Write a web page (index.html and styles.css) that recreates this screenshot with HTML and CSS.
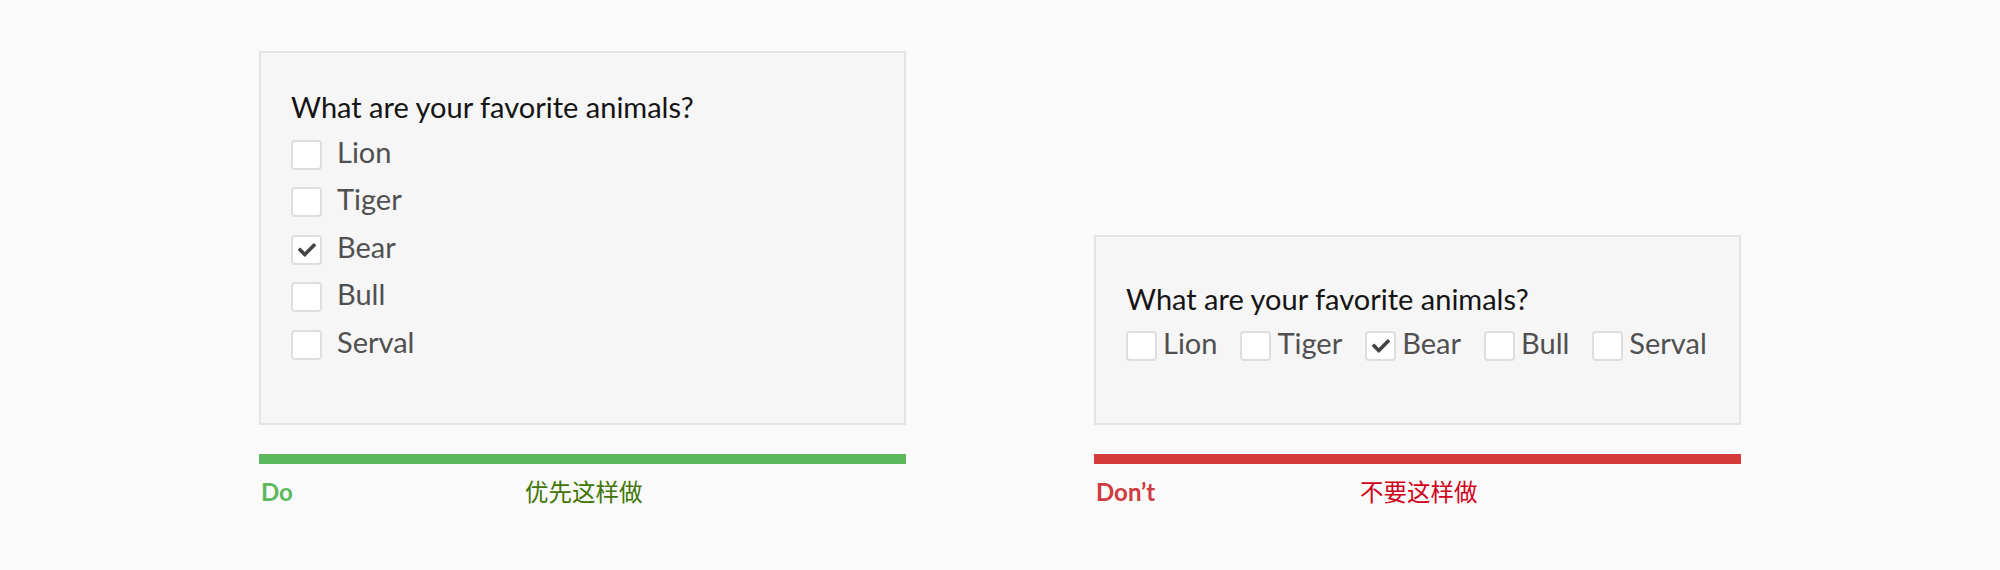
FILE: index.html
```html
<!DOCTYPE html>
<html lang="zh-CN">
<head>
<meta charset="utf-8">
<title>Checkbox layout</title>
<link rel="stylesheet" href="styles.css">
</head>
<body>
<div class="page">
  <div class="col">
    <div class="box box-do">
      <div class="question">What are your favorite animals?</div>
      <div class="list-v">
        <div class="opt"><span class="cb"></span><span class="lbl">Lion</span></div>
        <div class="opt"><span class="cb"></span><span class="lbl">Tiger</span></div>
        <div class="opt"><span class="cb"><svg viewBox="0 0 512 512" class="chk"><path d="M173.898 439.404l-166.4-166.4c-9.997-9.997-9.997-26.206 0-36.204l36.203-36.204c9.997-9.998 26.207-9.998 36.204 0L192 312.69 432.095 72.596c9.997-9.997 26.207-9.997 36.204 0l36.203 36.204c9.997 9.997 9.997 26.206 0 36.204l-294.4 294.401c-9.998 9.997-26.207 9.997-36.204-.001z"/></svg></span><span class="lbl">Bear</span></div>
        <div class="opt"><span class="cb"></span><span class="lbl">Bull</span></div>
        <div class="opt"><span class="cb"></span><span class="lbl">Serval</span></div>
      </div>
    </div>
    <div class="bar bar-do"></div>
    <div class="caption">
      <span class="cap-en cap-en-do">Do</span>
      <span class="cap-zh cap-zh-do">优先这样做</span>
    </div>
  </div>
  <div class="col">
    <div class="box box-dont">
      <div class="question">What are your favorite animals?</div>
      <div class="list-h">
        <div class="opt-h"><span class="cb"></span><span class="lbl">Lion</span></div>
        <div class="opt-h"><span class="cb"></span><span class="lbl">Tiger</span></div>
        <div class="opt-h"><span class="cb"><svg viewBox="0 0 512 512" class="chk"><path d="M173.898 439.404l-166.4-166.4c-9.997-9.997-9.997-26.206 0-36.204l36.203-36.204c9.997-9.998 26.207-9.998 36.204 0L192 312.69 432.095 72.596c9.997-9.997 26.207-9.997 36.204 0l36.203 36.204c9.997 9.997 9.997 26.206 0 36.204l-294.4 294.401c-9.998 9.997-26.207 9.997-36.204-.001z"/></svg></span><span class="lbl">Bear</span></div>
        <div class="opt-h"><span class="cb"></span><span class="lbl">Bull</span></div>
        <div class="opt-h"><span class="cb"></span><span class="lbl">Serval</span></div>
      </div>
    </div>
    <div class="bar bar-dont"></div>
    <div class="caption">
      <span class="cap-en cap-en-dont">Don’t</span>
      <span class="cap-zh cap-zh-dont">不要这样做</span>
    </div>
  </div>
</div>
</body>
</html>
```
FILE: styles.css
```css
html, body {
  margin: 0;
  padding: 0;
  background: #fafafa;
}
body {
  font-family: Lato, "Noto Sans CJK SC", sans-serif;
}
.page {
  display: flex;
  justify-content: center;
  align-items: flex-end;
  gap: 188px;
  padding-top: 51px;
}
.col {
  width: 647px;
  display: flex;
  flex-direction: column;
}
.box {
  box-sizing: border-box;
  border: 2px solid #e4e4e4;
  background: #f6f6f6;
  padding-left: 30px;
  padding-right: 30px;
}
.box-do {
  padding-top: 36px;
  padding-bottom: 57px;
}
.box-dont {
  padding-top: 44px;
  padding-bottom: 58px;
}
.question {
  font-size: 29px;
  line-height: 36px;
  color: #141414;
}
.list-v {
  margin-top: 3px;
  display: flex;
  flex-direction: column;
}
.opt {
  height: 47.5px;
  display: flex;
  align-items: center;
  gap: 15px;
}
.lbl {
  font-size: 29px;
  line-height: 36px;
  color: #505050;
}
.cb {
  box-sizing: border-box;
  width: 31px;
  height: 30px;
  border: 2px solid #dedede;
  border-radius: 4px;
  background: #fff;
  display: flex;
  align-items: center;
  justify-content: center;
  margin-top: 6px;
  flex: none;
}
.chk {
  width: 18px;
  height: 18px;
  fill: #444;
}
.list-h {
  margin-top: 4px;
  height: 44px;
  display: flex;
  align-items: center;
  gap: 23px;
}
.opt-h {
  display: flex;
  align-items: center;
  gap: 6px;
}
.bar {
  height: 10px;
  margin-top: 29px;
}
.bar-do { background: #5cb85c; }
.bar-dont { background: #d43a3a; }
.caption {
  margin-top: 12px;
  display: flex;
  align-items: baseline;
  padding-left: 2px;
}
.cap-en {
  width: 264px;
  font-size: 24px;
  line-height: 30px;
  font-weight: 700;
}
.cap-en-do { color: #5cb85c; }
.cap-en-dont { color: #cf3a3e; }
.cap-zh {
  font-family: "Noto Sans CJK SC", sans-serif;
  font-size: 23.5px;
  line-height: 30px;
}
.cap-zh-do { color: #417505; }
.cap-zh-dont { color: #d0021b; }
```
